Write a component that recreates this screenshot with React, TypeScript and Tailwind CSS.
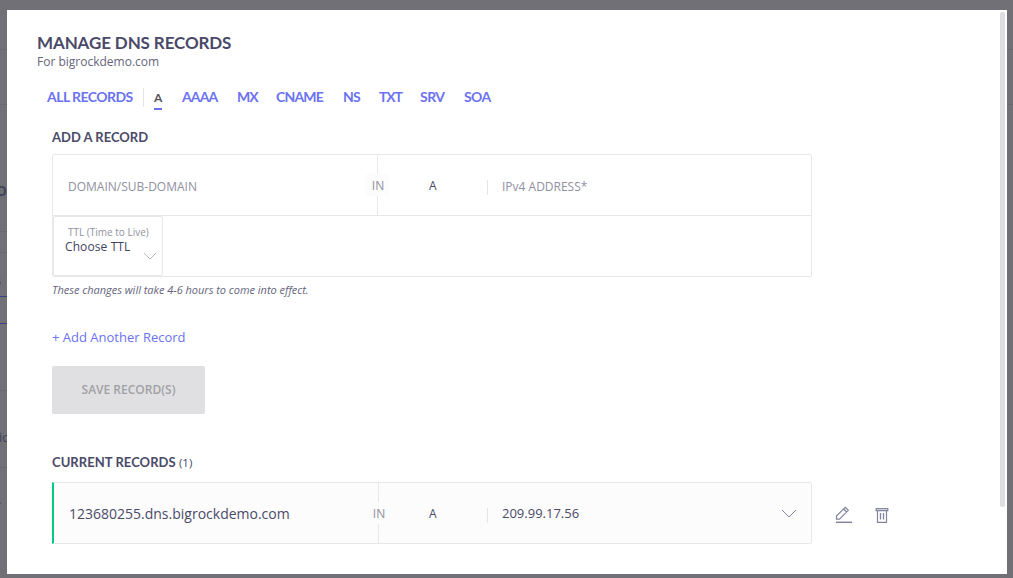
import clsx from "clsx";

const tabs = [
  { name: "AAAA", style: "w-[55px] tracking-[-0.9px]" },
  { name: "MX", style: "w-[39px] tracking-[-1px]" },
  { name: "CNAME", style: "w-[67px] tracking-[-0.8px]" },
  { name: "NS", style: "w-[36px] tracking-[-0.9px]" },
  { name: "TXT", style: "w-[41px] tracking-[-1.2px]" },
  { name: "SRV", style: "w-[44px] tracking-[-0.5px]" },
  { name: "SOA", style: "w-[40px] tracking-[-0.6px]" },
];

function Chevron({ className }: { className?: string }) {
  return (
    <svg className={className} viewBox="0 0 16 9" fill="none" stroke="currentColor">
      <path d="M1 1l7 7 7-7" />
    </svg>
  );
}

function EditIcon() {
  return (
    <svg className="h-[18px] w-[18px]" viewBox="0 0 18 18" fill="none" stroke="#84849e" strokeWidth="1.2">
      <path d="M1.5 13.2V10L10.3 1.3l3 3-8.8 8.9zM8.6 3l3 3" />
      <path d="M1 16.3h16" strokeWidth="1.5" />
    </svg>
  );
}

function TrashIcon() {
  return (
    <svg className="h-4 w-[14px]" viewBox="0 0 14 16" fill="none" stroke="#84849e" strokeWidth="1.2">
      <path d="M1.2 1.5h11.6v2.2H1.2z" fill="#d5d5df" />
      <path d="M2.5 4v11.3h9V4" />
      <path d="M5.5 6v6.5M8.5 6v6.5" strokeWidth="1.3" />
    </svg>
  );
}

/* "IN" sits on the column line and breaks it */
function Divider({ boxed }: { boxed?: boolean }) {
  return (
    <div className="flex h-full w-[24px] flex-col items-center text-[12px] text-[#90909f]">
      <div className="h-[19px] w-px bg-[#e8e8ea]" />
      <div className={clsx("flex h-[22px] w-[23px] items-center justify-center", boxed && "bg-[#fcfcfc]")}>
        <span className="pt-[2px] pl-[2px]">IN</span>
      </div>
      <div className="w-px flex-1 bg-[#e8e8ea]" />
    </div>
  );
}

/* What is left of the page behind the dialog */
function Backdrop() {
  return (
    <div className="absolute inset-0 overflow-hidden bg-[#717076] text-[#42435b]">
      <div className="absolute top-[49px] h-px w-full bg-[#68696d]" />
      <div className="absolute top-[104px] h-px w-full bg-[#68696d]" />
      <span className="absolute top-[178px] -left-[4px] text-[18px] leading-[22px] font-semibold">o</span>
      <div className="absolute top-[231px] h-px w-[7px] bg-[#68696d]" />
      <div className="absolute top-[252px] h-px w-[7px] bg-[#68696d]" />
      <span className="absolute top-[272px] -left-[5px] text-[13px] leading-[16px]">s</span>
      <div className="absolute top-[296px] h-px w-[7px] bg-[#3b4080]" />
      <div className="absolute top-[323px] h-px w-[7px] bg-[#3b4080]" />
      <div className="absolute top-[390px] h-px w-[7px] bg-[#68696d]" />
      <span className="absolute top-[429px] -left-[1px] text-[13px] leading-[16px]">ic</span>
      <div className="absolute top-[467px] h-px w-[7px] bg-[#68696d]" />
      <span className="absolute top-[491px] -left-[2px] text-[13px] leading-[16px]">.</span>
    </div>
  );
}

export default function App() {
  return (
    <main className="relative h-[578px] w-[1013px] overflow-hidden pt-[10px] pl-[7px] font-['Open_Sans',sans-serif] whitespace-nowrap text-[#4a4a68]">
      <Backdrop />
      <section className="relative flex h-[564px] w-[1000px] justify-between bg-white pt-[2px] pr-[2px]">
        <div className="pt-[21px] pl-[30px]">
          <h1 className="h-[20px] font-['Lato',sans-serif] text-[17px] leading-[20px] font-bold tracking-[-0.12px]">
            MANAGE DNS RECORDS
          </h1>
          <p className="h-[17px] text-[12px] leading-[17px] text-[#65657d]">For bigrockdemo.com</p>

          {/* Record types */}
          <nav className="mt-[17px] flex h-[23px] pl-[10px] font-['Lato',sans-serif] text-[14px] leading-[20px] font-bold text-[#6b72f2]">
            <a className="w-[96px] tracking-[-0.55px]">ALL RECORDS</a>
            <div className="mt-px h-[19px] w-[11px] border-l border-[#e5e5e8]" />
            <a className="w-[28px] text-[#55555f]">
              <span className="block h-[23px] w-2 border-b-2 border-[#6b72f2] text-[12px] leading-[22px]">A</span>
            </a>
            {tabs.map((tab) => (
              <a key={tab.name} className={tab.style}>
                {tab.name}
              </a>
            ))}
          </nav>

          <div className="pl-[15px]">
            {/* New record */}
            <h2 className="mt-[17px] h-[27px] font-['Lato',sans-serif] text-[13px] leading-[20px] font-bold">
              ADD A RECORD
            </h2>
            <div className="w-[760px] rounded-[2px] border border-[#e8e8ea]">
              <div className="flex h-[61px] items-center border-b border-[#e8e8ea] text-[12px]">
                <span className="w-[312px] pt-[3px] pl-[15px] text-[#90909f]">DOMAIN/SUB-DOMAIN</span>
                <Divider boxed />
                <span className="w-[98px] pt-[2px] pl-[40px]">A</span>
                <span className="mt-[4px] flex h-[15px] items-center border-l border-[#e5e5e8] pl-[14px] text-[#90909f]">
                  IPv4 ADDRESS*
                </span>
              </div>
              <div className="flex h-[60px]">
                <div className="relative h-[60px] w-[110px] rounded-[2px] border border-[#e8e8ea] pt-[8px] pl-[11px]">
                  <p className="h-[14px] pl-[3px] text-[10px] leading-[15px] text-[#90909f]">TTL (Time to Live)</p>
                  <p className="text-[12px] leading-[15px] font-medium tracking-[0.1px] text-[#42425e]">Choose TTL</p>
                  <Chevron className="absolute right-[5px] bottom-[15px] h-2 w-[14px] text-[#aaa]" />
                </div>
              </div>
            </div>
            <p className="mt-[5px] h-[16px] text-[11px] leading-[16px] tracking-[-0.02px] text-[#65657d] italic">
              These changes will take 4-6 hours to come into effect.
            </p>
            <a className="mt-[30px] block h-[19px] text-[13px] leading-[19px] text-[#6b72f2]">
              + Add Another Record
            </a>
            <button className="mt-[19px] block h-[48px] w-[153px] rounded-[2px] bg-[#e0e0e2] text-[12px] font-semibold text-[#a1a1a5]">
              SAVE RECORD(S)
            </button>

            {/* Saved records */}
            <h2 className="mt-[38px] h-[30px] font-['Lato',sans-serif] text-[13px] leading-[20px] font-bold tracking-[0.05px]">
              CURRENT RECORDS <span className="font-['Open_Sans',sans-serif] text-[11.5px] font-medium">(1)</span>
            </h2>
            <div className="flex items-center">
              <div className="flex h-[62px] w-[760px] items-center rounded-r-[2px] border border-l-2 border-[#e8e8ea] border-l-[#00c982] bg-[#fcfcfc]">
                <span className="w-[312px] pt-px pl-[15px] text-[14px]">123680255.dns.bigrockdemo.com</span>
                <Divider />
                <span className="w-[97px] pt-px pl-[39px] text-[12px]">A</span>
                <span className="mt-[4px] h-[15px] w-[294px] border-l border-[#e5e5e8] pl-[14px] text-[13px] leading-[11px]">
                  209.99.17.56
                </span>
                <Chevron className="h-[9px] w-4 text-[#84849e]" />
              </div>
              <div className="ml-[23px] flex items-center gap-[22px] pt-[4px]">
                <EditIcon />
                <TrashIcon />
              </div>
            </div>
          </div>
        </div>
        <div className="h-[495px] w-[5px] rounded-[2px] bg-[#dedde2]" />
      </section>
    </main>
  );
}
